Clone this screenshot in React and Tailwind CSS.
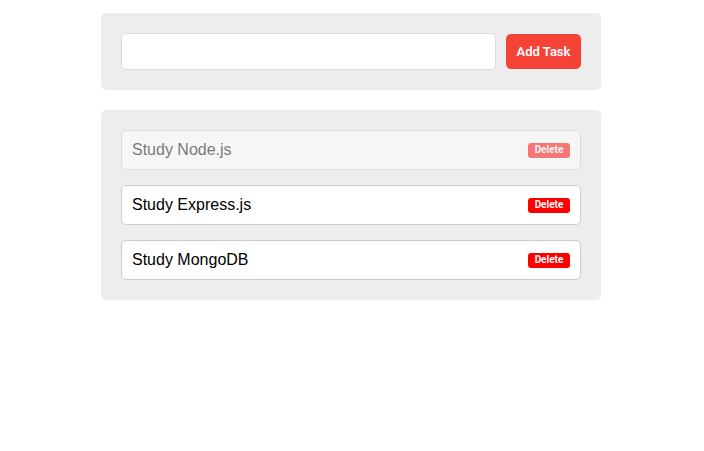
export default function App() {
  const tasks = [
    { text: "Study Node.js", done: true },
    { text: "Study Express.js", done: false },
    { text: "Study MongoDB", done: false },
  ];
  return (
    <div className="w-[704px] h-[451px] bg-white pt-[13px] font-['Liberation_Sans',Arial,sans-serif]">
      <div className="ml-[101px] w-[500px]">
        <div className="bg-[#ededed] rounded-[5px] p-5 flex items-center gap-[10px]">
          <input
            className="flex-1 h-[37px] bg-white border border-[#dcdcdc] rounded-[5px] px-[10px] text-base outline-none"
            type="text"
          />
          <button className="h-[35px] w-[75px] bg-[#f44336] text-white rounded-[5px] text-[13px] font-semibold font-['Roboto',Arial,sans-serif]">
            Add Task
          </button>
        </div>
        <div className="mt-5 bg-[#ededed] rounded-[5px] p-5 flex flex-col gap-[15px]">
          {tasks.map((t) => (
            <div
              key={t.text}
              className={
                "h-10 bg-white border border-[#cccccc] rounded-[5px] flex items-center justify-between pl-[10px] pr-[10px] " +
                (t.done ? "opacity-50" : "")
              }
            >
              <span className="text-base text-black">{t.text}</span>
              <button className="h-[15px] w-[42px] bg-[#ff0000] text-white rounded-[3px] text-[10px] font-bold leading-none font-['Roboto',Arial,sans-serif]">
                Delete
              </button>
            </div>
          ))}
        </div>
      </div>
    </div>
  );
}
